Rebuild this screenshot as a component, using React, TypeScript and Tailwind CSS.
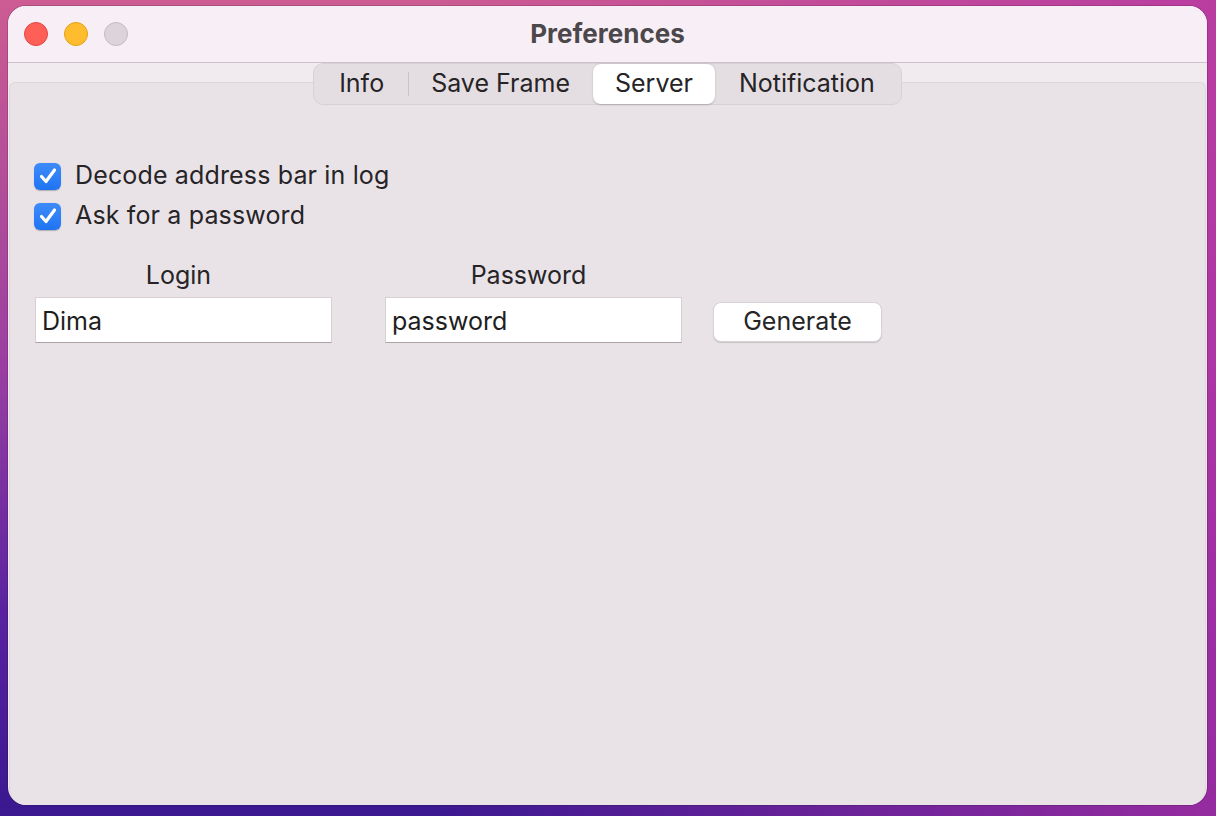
import React from "react";

const font = { fontFamily: "Inter, 'Noto Sans', sans-serif" };

function Check({ label }: { label: string }) {
  return (
    <label className="flex items-center gap-[14px] h-[40px]">
      <span className="flex items-center justify-center w-[27px] h-[27px] rounded-[6px] bg-gradient-to-b from-[#3d8bfa] to-[#1f74f3] shadow-[0_0.5px_1px_rgba(0,0,0,0.25)]">
        <svg width="22" height="22" viewBox="0 0 22 22" fill="none">
          <path d="M4.5 11.5 L9 16.5 L17.5 5" stroke="white" strokeWidth="3.2" strokeLinecap="round" strokeLinejoin="round" />
        </svg>
      </span>
      <span className="text-[25px] text-[#262426] tracking-[0.15px]">{label}</span>
    </label>
  );
}

function Field({ label, value }: { label: string; value: string }) {
  return (
    <div className="flex flex-col w-[297px]">
      <div className="text-center text-[25px] text-[#262426] h-[28px] leading-[28px] mb-[8px] pr-[10px]">{label}</div>
      <div className="h-[46px] bg-white border border-[#d6d0d5] border-b-[#aaa4a9] flex items-center px-[6px] pt-[3px] text-[25px] text-[#1e1e1e]">
        {value}
      </div>
    </div>
  );
}

export default function App() {
  return (
    <div
      style={font}
      className="w-[1216px] h-[816px] bg-[linear-gradient(to_right,rgba(180,50,165,0)_35%,rgba(180,50,165,0.75)_100%),linear-gradient(to_bottom,#cc5c92_0%,#9a3fa2_45%,#5a22a0_75%,#3a1890_100%)] pl-[8px] pt-[6px] overflow-hidden"
    >
      <div className="w-[1199px] h-[799px] rounded-[18px] overflow-hidden flex flex-col bg-[#f1ebf0] shadow-[0_0_0_1px_rgba(0,0,0,0.15)]">
        <div className="relative h-[57px] bg-[#f8eff6] border-b border-[#c9c2c7] flex items-center shrink-0">
          <div className="flex gap-[16px] pl-[16px]">
            <span className="w-[24px] h-[24px] rounded-full bg-[#fe5f57] border border-[#e2463f]" />
            <span className="w-[24px] h-[24px] rounded-full bg-[#febc2e] border border-[#e1a116]" />
            <span className="w-[24px] h-[24px] rounded-full bg-[#dcd4da] border border-[#c3bbc1]" />
          </div>
          <div className="absolute inset-0 flex items-center justify-center text-[26px] font-bold text-[#4b474a] pb-[2px]">
            Preferences
          </div>
        </div>
        <div className="flex-1 pt-[19px] px-[1px] flex flex-col">
          <div className="flex-1 bg-[#e9e3e8] border-t border-x border-[#ddd7dc] rounded-t-[6px] rounded-b-[17px] flex flex-col">
            <div className="flex justify-center -mt-[20px]">
              <div className="flex items-center h-[42px] px-[1px] rounded-[10px] bg-[#e4dee3] border border-[#d7d1d6] text-[25px] text-[#262426]">
                <div className="pl-[24px] pr-[24px] h-[40px] flex items-center">Info</div>
                <div className="w-[1px] h-[24px] bg-[#c9c3c8]" />
                <div className="pl-[22px] pr-[23px] h-[40px] flex items-center">Save Frame</div>
                <div className="px-[22px] h-[40px] flex items-center bg-white rounded-[8px] shadow-[0_0.5px_2px_rgba(0,0,0,0.2)]">Server</div>
                <div className="pl-[24px] pr-[25px] h-[40px] flex items-center">Notification</div>
              </div>
            </div>
            <div className="pl-[24px] pt-[51px] flex flex-col">
              <Check label="Decode address bar in log" />
              <Check label="Ask for a password" />
            </div>
            <div className="flex items-end pl-[25px] pt-[25px]">
              <Field label="Login" value="Dima" />
              <div className="w-[53px]" />
              <Field label="Password" value="password" />
              <button className="ml-[31px] mb-[1px] w-[169px] h-[40px] bg-white rounded-[8px] border border-[#d9d3d8] shadow-[0_1px_1px_rgba(0,0,0,0.15)] text-[25px] text-[#262426] flex items-center justify-center">
                Generate
              </button>
            </div>
          </div>
        </div>
      </div>
    </div>
  );
}
